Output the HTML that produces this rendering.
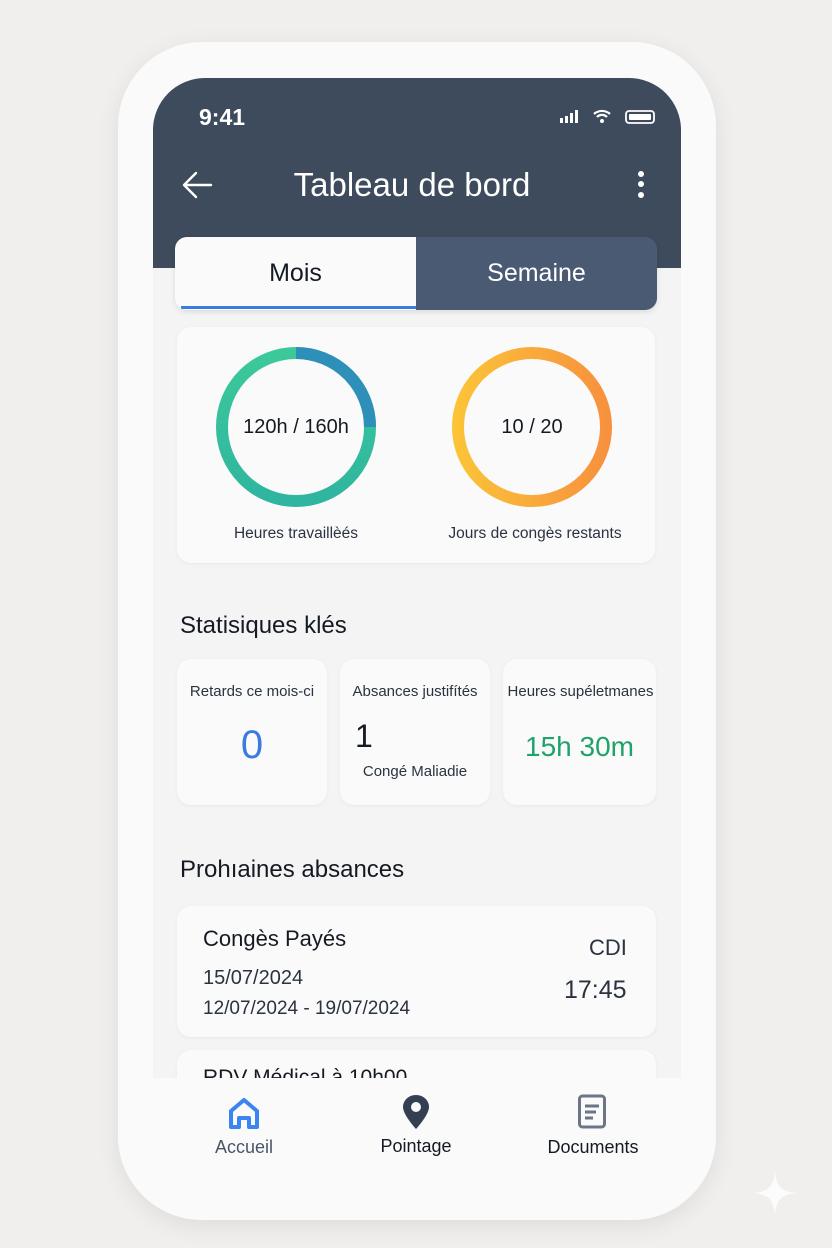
<!DOCTYPE html>
<html><head><meta charset="utf-8"><style>
*{margin:0;padding:0;box-sizing:border-box}
body{width:832px;height:1248px;background:#f0efed;font-family:"Liberation Sans",sans-serif;position:relative;overflow:hidden}
.abs{position:absolute}
.phone{left:118px;top:42px;width:598px;height:1178px;background:#fafafa;border-radius:84px;box-shadow:0 6px 24px rgba(0,0,0,.08)}
.screen{left:153px;top:78px;width:528px;height:1110px;background:#f4f4f5;border-radius:52px 52px 0 0;overflow:hidden}
.hdr{left:0;top:0;width:528px;height:190px;background:#3d4b5c}
.card{background:#fafafa;border-radius:14px;box-shadow:0 1px 4px rgba(0,0,0,.05)}
.t{position:absolute;white-space:nowrap}
</style></head><body>
<div class="abs phone"></div>
<div class="abs screen">
 <div class="abs hdr"></div>
 <div class="t" style="left:46px;top:26px;color:#fff;font-size:23px;font-weight:bold">9:41</div>
 <svg class="abs" style="left:405px;top:30px" width="100" height="18">
  <rect x="2" y="10" width="3" height="5" fill="#fff"/><rect x="7" y="8" width="3" height="7" fill="#fff"/><rect x="12" y="5" width="3" height="10" fill="#fff"/><rect x="17" y="2" width="3" height="13" fill="#fff"/>
  <path d="M36 6a12 12 0 0 1 16 0M39 9a7 7 0 0 1 10 0" stroke="#fff" stroke-width="2.2" fill="none"/><circle cx="44" cy="13" r="2" fill="#fff"/>
  <rect x="68" y="3" width="28" height="12" rx="3" stroke="#fff" stroke-width="1.8" fill="none"/><rect x="71" y="6" width="22" height="6" rx="1" fill="#fff"/>
 </svg>
 <svg class="abs" style="left:28px;top:92px" width="32" height="30"><path d="M30 15H3M15 3L3 15l12 12" stroke="#fff" stroke-width="2.4" fill="none" stroke-linecap="round" stroke-linejoin="round"/></svg>
 <div class="t" style="left:0;width:518px;text-align:center;top:88px;color:#fff;font-size:33px">Tableau de bord</div>
 <svg class="abs" style="left:482px;top:92px" width="12" height="30"><circle cx="6" cy="4" r="3" fill="#fff"/><circle cx="6" cy="14" r="3" fill="#fff"/><circle cx="6" cy="25" r="3" fill="#fff"/></svg>
 <div class="abs" style="left:22px;top:159px;width:482px;height:73px;border-radius:12px;overflow:hidden;box-shadow:0 2px 6px rgba(0,0,0,.1)">
  <div class="abs" style="left:0;top:0;width:241px;height:73px;background:#fafafa"></div>
  <div class="abs" style="left:241px;top:0;width:241px;height:73px;background:#4a5a72"></div>
  <div class="abs" style="left:6px;top:69px;width:235px;height:3px;background:#3b7be0"></div>
  <div class="t" style="left:0;width:241px;text-align:center;top:22px;font-size:25px;color:#151a22">Mois</div>
  <div class="t" style="left:241px;width:241px;text-align:center;top:22px;font-size:25px;color:#fff">Semaine</div>
 </div>
 <div class="abs card" style="left:24px;top:249px;width:478px;height:236px"></div>
 <svg class="abs" style="left:0;top:0" width="528" height="500">
  <defs>
   <linearGradient id="g1" x1="0" y1="0" x2="0" y2="1"><stop offset="0" stop-color="#3cc99a"/><stop offset="1" stop-color="#2fb5a0"/></linearGradient>
   <linearGradient id="g2" x1="0" y1="0" x2="1" y2="0"><stop offset="0" stop-color="#fbc338"/><stop offset="1" stop-color="#f7913e"/></linearGradient>
  </defs>
  <circle cx="143" cy="349" r="74" stroke="url(#g1)" stroke-width="12" fill="none"/>
  <path d="M143 275A74 74 0 0 1 217 349" stroke="#2e8fb8" stroke-width="12" fill="none"/>
  <circle cx="379" cy="349" r="74" stroke="url(#g2)" stroke-width="12" fill="none"/>
 </svg>
 <div class="t" style="left:43px;width:200px;text-align:center;top:338px;font-size:20px;color:#151a22">120h / 160h</div>
 <div class="t" style="left:279px;width:200px;text-align:center;top:338px;font-size:20px;color:#151a22">10 / 20</div>
 <div class="t" style="left:43px;width:200px;text-align:center;top:447px;font-size:15.5px;color:#2b3240">Heures travaillèés</div>
 <div class="t" style="left:262px;width:240px;text-align:center;top:447px;font-size:15.5px;color:#2b3240">Jours de congès restants</div>
 <div class="t" style="left:27px;top:534px;font-size:24px;color:#151a22">Statisiques klés</div>
 <div class="abs card" style="left:24px;top:581px;width:150px;height:146px"></div>
 <div class="abs card" style="left:187px;top:581px;width:150px;height:146px"></div>
 <div class="abs card" style="left:350px;top:581px;width:153px;height:146px"></div>
 <div class="t" style="left:24px;width:150px;text-align:center;top:605px;font-size:15px;color:#2b3240">Retards ce mois-ci</div>
 <div class="t" style="left:24px;width:150px;text-align:center;top:645px;font-size:40px;color:#3b7be0">0</div>
 <div class="t" style="left:187px;width:150px;text-align:center;top:605px;font-size:15px;color:#2b3240">Absances justifítés</div>
 <div class="t" style="left:202px;top:640px;font-size:32px;color:#151a22">1</div>
 <div class="t" style="left:187px;width:150px;text-align:center;top:685px;font-size:15px;color:#2b3240">Congé Maliadie</div>
 <div class="t" style="left:350px;width:155px;text-align:center;top:605px;font-size:15px;color:#2b3240">Heures supéletmanes</div>
 <div class="t" style="left:350px;width:153px;text-align:center;top:653px;font-size:28px;color:#1fa36a">15h 30m</div>
 <div class="t" style="left:27px;top:778px;font-size:24px;color:#151a22">Prohıaines absances</div>
 <div class="abs card" style="left:24px;top:828px;width:479px;height:131px"></div>
 <div class="t" style="left:50px;top:848px;font-size:22px;color:#151a22">Congès Payés</div>
 <div class="t" style="left:50px;top:889px;font-size:20px;color:#2b3240">15/07/2024</div>
 <div class="t" style="left:50px;top:920px;font-size:19px;color:#2b3240">12/07/2024 - 19/07/2024</div>
 <div class="t" style="left:436px;top:857px;font-size:22px;color:#2b3240">CDI</div>
 <div class="t" style="left:411px;top:898px;font-size:25px;color:#2b3240">17:45</div>
 <div class="abs card" style="left:24px;top:972px;width:479px;height:80px"></div>
 <div class="t" style="left:50px;top:988px;font-size:21px;color:#151a22">RDV Médical à 10h00</div>
 <div class="abs" style="left:0;top:1000px;width:528px;height:120px;background:#fafafa"></div>
</div>
<div class="abs" style="left:118px;top:1078px;width:598px;height:142px;background:#fafafa;border-radius:0 0 84px 84px"></div>
<svg class="abs" style="left:226px;top:1096px" width="36" height="34"><path d="M5 31V15L18 4l13 11v16h-8v-9h-10v9z" stroke="#3b85f0" stroke-width="4" fill="none" stroke-linejoin="round"/></svg>
<div class="t" style="left:194px;width:100px;text-align:center;top:1137px;font-size:18px;color:#4a5566">Accueil</div>
<svg class="abs" style="left:400px;top:1094px" width="32" height="36"><path d="M16 1C8 1 3 7 3 13c0 8 13 22 13 22s13-14 13-22C29 7 24 1 16 1z" fill="#343f52"/><circle cx="16" cy="13" r="5" fill="#fafafa"/></svg>
<div class="t" style="left:366px;width:100px;text-align:center;top:1136px;font-size:18px;color:#151a22">Pointage</div>
<svg class="abs" style="left:577px;top:1094px" width="32" height="36"><rect x="2.5" y="2" width="25" height="31" rx="3" stroke="#6b7585" stroke-width="3" fill="none"/><path d="M8 12h14M8 18h11M8 24h8" stroke="#6b7585" stroke-width="3"/></svg>
<div class="t" style="left:533px;width:120px;text-align:center;top:1137px;font-size:18px;color:#151a22">Documents</div>
<svg class="abs" style="left:752px;top:1170px" width="46" height="46"><path d="M23 2C25 17 29 21 44 23 29 25 25 29 23 44 21 29 17 25 2 23 17 21 21 17 23 2z" fill="#fff" opacity=".8"/></svg>
</body></html>
